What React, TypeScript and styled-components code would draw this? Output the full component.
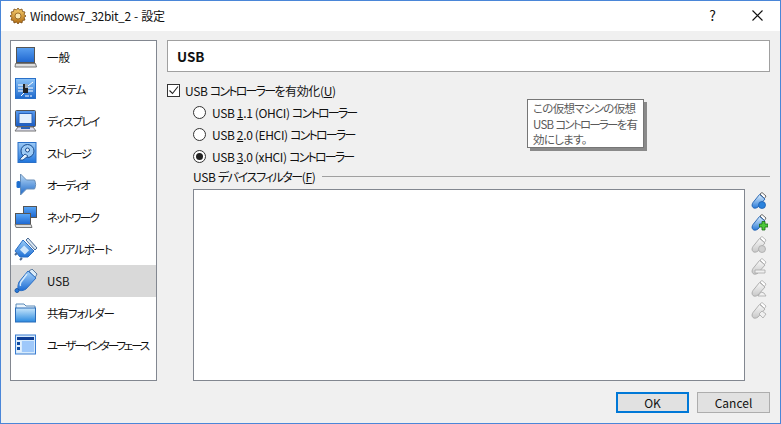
import React from "react";
import styled, { createGlobalStyle } from "styled-components";

const Global = createGlobalStyle`
  html, body { margin: 0; padding: 0; background: #f0f0f0; }
  body { font-family: "Noto Sans CJK JP", "Noto Sans", sans-serif; font-size: 12px; color: #111; }
  * { box-sizing: border-box; }
`;

const Window = styled.div`
  position: relative; width: 781px; height: 424px; border: 1px solid #4a86d8;
  display: flex; flex-direction: column; overflow: hidden;
  font-feature-settings: "palt"; 
`;
const TitleBar = styled.div`
  height: 30px; background: #fff; display: flex; align-items: center; padding-left: 8px; flex: none;
`;
const Title = styled.div`
  margin-left: 3px; font-size: 12px; line-height: 16px; color: #111; flex: 1; letter-spacing: -0.35px; word-spacing: 1px;
`;
const TitleButton = styled.div`
  width: 45px; height: 30px; display: flex; align-items: center; justify-content: center; flex: none; font-size: 14px; margin-top: -2px;
`;
const Body = styled.div`
  flex: 1; background: #f0f0f0; padding: 9px 10px 9px 9px; display: flex; flex-direction: column; gap: 11px; min-height: 0;
`;
const Content = styled.div`
  display: flex; gap: 10px; height: 341px; flex: none;
`;
const Sidebar = styled.div`
  width: 147px; flex: none; background: #fff; border: 1px solid #828790;
`;
const NavItem = styled.div<{ $selected?: boolean }>`
  height: 32px; display: flex; align-items: center; gap: 9px; padding-left: 3px;
  background: ${(p) => (p.$selected ? "#d9d9d9" : "transparent")};
`;
const NavLabel = styled.span<{ $ls: number }>`
  font-size: 11.5px; line-height: 16px; letter-spacing: ${(p) => p.$ls}px; white-space: nowrap; color: #111;
`;
const Main = styled.div`
  flex: 1; display: flex; flex-direction: column; min-width: 0;
`;
const Header = styled.div`
  height: 32px; background: #fff; border: 1px solid #a0a0a0; display: flex; align-items: center; padding-left: 9px;
  font-size: 13.5px; font-weight: 700; color: #111; flex: none;
`;
const Row = styled.label<{ $indent?: number }>`
  display: flex; align-items: center; height: 22px; gap: 6px; padding-left: ${(p) => p.$indent ?? 0}px;
  font-size: 12px; letter-spacing: -0.35px; white-space: nowrap; color: #111;
`;
const CheckRow = styled(Row)`
  margin-top: 7px; gap: 5px;
`;
const Kana = styled.span<{ $ls?: number }>`
  letter-spacing: ${(p) => p.$ls ?? -1.8}px;
`;
const Box = styled.span`
  width: 13px; height: 13px; border: 1px solid #333; background: #fff; display: block; flex: none;
`;
const CheckMark = styled.svg`
  width: 11px; height: 11px; display: block;
`;
const Radio = styled.span<{ $on?: boolean }>`
  width: 13px; height: 13px; border-radius: 50%; border: 1px solid #333; background: #fff; flex: none;
  display: flex; align-items: center; justify-content: center;
  &::after { content: ""; width: 7px; height: 7px; border-radius: 50%; background: ${(p) => (p.$on ? "#222" : "transparent")}; }
`;
const Mn = styled.span`
  text-decoration: underline; text-underline-offset: 1px;
`;
const GroupHead = styled.div`
  display: flex; align-items: center; gap: 6px; padding-left: 26px; height: 20px; margin-top: -1px;
  font-size: 12px; letter-spacing: -0.35px; color: #111; white-space: nowrap;
`;
const Rule = styled.span`
  flex: 1; height: 1px; background: #a0a0a0;
`;
const FilterArea = styled.div`
  display: flex; flex: 1; padding-left: 26px; margin-top: 3px; min-height: 0;
`;
const FilterList = styled.div`
  flex: 1; background: #fff; border: 1px solid #828790;
`;
const Tools = styled.div`
  width: 25px; flex: none; display: flex; flex-direction: column; align-items: flex-end; gap: 4px; padding: 3px 2px 0 0;
`;
const ToolIcon = styled.svg`
  width: 18px; height: 18px; display: block;
`;
const Footer = styled.div`
  display: flex; justify-content: flex-end; gap: 8px; flex: none;
`;
const Button = styled.button<{ $primary?: boolean }>`
  width: 73px; height: 21px; padding: 0; background: #e1e1e1; font: inherit; font-size: 12px; color: #111;
  border: ${(p) => (p.$primary ? "2px solid #0078d7" : "1px solid #adadad")}; line-height: 16px;
`;
const Tooltip = styled.div`
  position: absolute; left: 526px; top: 98px; width: 117px; height: 49px; background: #fff; border: 1px solid #767676;
  box-shadow: 3px 3px 0 #8a8a8a; padding: 1px 0 0 5px; font-size: 11.5px; line-height: 15.5px; color: #5a5a5a; letter-spacing: -0.7px; white-space: nowrap;
`;

const G = ({ id, a = "#8cc4f8", b = "#1f6fd8" }: { id: string; a?: string; b?: string }) => (
  <defs>
    <linearGradient id={id} x1="0" y1="0" x2="0" y2="1">
      <stop offset="0" stopColor={a} />
      <stop offset="1" stopColor={b} />
    </linearGradient>
  </defs>
);

const NavSvg = styled.svg`
  width: 24px; height: 24px; flex: none; display: block;
`;

const icons: Record<string, React.ReactNode> = {
  general: (
    <>
      <G id="g1" a="#5aa0f0" b="#1e66d0" />
      <rect x="2.5" y="2.500" width="18" height="15" fill="url(#g1)" stroke="#555" />
      <path d="M1.500 18.500h20l1 3.500H1z" fill="#ddd" stroke="#777" />
    </>
  ),
  system: (
    <>
      <G id="g2" a="#8cc4f8" b="#1c68cc" />
      <rect x="1.5" y="1.500" width="20" height="20" fill="url(#g2)" stroke="#2a70c8" />
      <path d="M4 8h5M4 11h5M4 14h5M14 9l5-4M14 11h5M14 14h5M7 19l3-3M14 18v2M12 18v2M17 18v2" stroke="#fff" strokeWidth="1" fill="none" />
      <rect x="9" y="7" width="5" height="9" fill="#222" />
      <rect x="11" y="7" width="3" height="4" fill="#9ab" />
    </>
  ),
  display: (
    <>
      <G id="g3" a="#5a9cf0" b="#1a5cc4" />
      <rect x="1.5" y="1.500" width="20" height="16" rx="1" fill="url(#g3)" stroke="#555" />
      <rect x="5" y="4.500" width="13" height="10" fill="#e4f0fd" stroke="#2a62b8" />
      <path d="M4 18h15l3 4H1z" fill="#dde" stroke="#777" />
      <rect x="7" y="18" width="9" height="2" fill="#2a62b8" />
    </>
  ),
  storage: (
    <>
      <G id="g4" a="#9ccaf6" b="#1f74dc" />
      <rect x="4" y="1.500" width="18" height="20" fill="url(#g4)" stroke="#2a70c8" />
      <circle cx="13.500" cy="10" r="6.500" fill="#9dcbf6" stroke="#1c4e90" />
      <path d="M6 18l5-5 3 2-5 4H6z" fill="#e6f2fc" stroke="#1c4e90" strokeWidth=".9" />
      <circle cx="13.500" cy="9" r="2" fill="#e6f2fc" stroke="#1c4e90" />
    </>
  ),
  audio: (
    <>
      <G id="g5" a="#bcdcf8" b="#1c68c8" />
      <path d="M6.500 1l6 6h8c1.500 3 1.500 6 0 9h-8l-6 6z" fill="url(#g5)" stroke="#6a8fb8" />
      <rect x="2.500" y="8" width="4" height="7" rx="1.500" fill="#1f70d0" />
    </>
  ),
  network: (
    <>
      <G id="g6" a="#5aa8f8" b="#1c66d0" />
      <rect x="9.5" y="1.500" width="13" height="11" fill="url(#g6)" stroke="#555" />
      <rect x="1.5" y="8.500" width="15" height="11" fill="url(#g6)" stroke="#555" />
      <path d="M1 19.500h16l1 3H2z" fill="#ddd" stroke="#777" />
    </>
  ),
  serial: (
    <>
      <G id="g7" a="#9ccdf8" b="#1f70d4" />
      <path d="M14 1l9 10-2 2-9-10z" fill="#d8e6f2" stroke="#4a6a94" />
      <path d="M9 3l11 11-6 6H6l-5-6z" fill="url(#g7)" stroke="#2a6ec4" />
      <path d="M7 10h7v6H7z" fill="#cfe6fb" transform="rotate(45 10.500 13)" />
      <path d="M3 16l-2 2M8 21l-2 2" stroke="#4a6a94" strokeWidth="2" />
    </>
  ),
  usb: (
    <>
      <G id="g8" a="#a8d4fa" b="#1c6cd4" />
      <path d="M15 2l3-2 5 5-2 4z" fill="#dcecf8" stroke="#5a7aa0" />
      <path d="M14 2l8 7-10 11c-3 2-6 2-7 1-2-2-1-5 0-8z" fill="url(#g8)" stroke="#2a6ec4" />
      <path d="M13 5l-6 8c-1 2-1 3-.5 4" fill="none" stroke="#d4eafc" strokeWidth="1.500" />
      <circle cx="3" cy="21.500" r="2" fill="#2a7ad8" stroke="#1c5aa8" />
    </>
  ),
  folder: (
    <>
      <G id="g9" a="#c8e6fb" b="#2a8ae0" />
      <path d="M2 6V3h8l2 2h9v3H2z" fill="#eaf4fc" stroke="#5a8ab8" />
      <rect x="1.5" y="7" width="20" height="14" fill="url(#g9)" stroke="#2b6cb8" />
    </>
  ),
  ui: (
    <>
      <rect x="1.5" y="2" width="20" height="19" fill="#d7ebfc" stroke="#3a7cd0" />
      <rect x="3" y="4" width="17" height="3" fill="#0d3c94" />
      <rect x="3" y="8" width="4" height="11" fill="#e4f0fd" />
      <rect x="3" y="9" width="3" height="3" fill="#0d4aa0" />
      <rect x="3" y="14" width="3" height="3" fill="#0d4aa0" />
      <rect x="8" y="8" width="12" height="11" fill="#9ec8fa" />
    </>
  ),
};

const nav: [string, string, number][] = [
  ["general", "一般", 0], ["system", "システム", -0.8], ["display", "ディスプレイ", -1.35], ["storage", "ストレージ", -1.7],
  ["audio", "オーディオ", -1.9], ["network", "ネットワーク", -1.6], ["serial", "シリアルポート", -1.15], ["usb", "USB", 0],
  ["folder", "共有フォルダー", -1.05], ["ui", "ユーザーインターフェース", -2.05],
];

type Badge = "remove" | "add" | "edit" | "del" | "up";
const ToolGlyph = ({ active, badge, id }: { active?: boolean; badge: Badge; id: string }) => {
  const a = active ? "#dceefc" : "#f8f8f8";
  const b = active ? "#2a7ad8" : "#c8c8c8";
  const s = active ? "#2060b0" : "#a8a8a8";
  return (
    <ToolIcon viewBox="0 0 18 18">
      <G id={id} a={a} b={b} />
      <path d="M10 2l2-1.500 4 3.500-1.500 2.500z" fill="#fff" stroke={active ? "#444" : "#aaa"} strokeWidth=".8" />
      <path d="M9.500 2.500l5.500 4.500-7 8c-2 1.500-4 1.500-5 .5-1.500-1.500-1-3.500 0-5z" fill={`url(#${id})`} stroke={s} strokeWidth=".9" />
      {badge === "remove" && <circle cx="12" cy="13" r="3.500" fill={active ? "#2a82dc" : "#d0d0d0"} stroke={s} strokeWidth=".8" />}
      {badge === "add" && <path d="M9.500 10h2.500V7.500h3V10H18v3h-3v3h-3v-3H9.500z" fill="#4cc83a" stroke="#1a6a12" strokeWidth=".8" />}
      {badge === "edit" && <path d="M5 12h10v3H5z" fill="#f0f0f0" stroke="#a8a8a8" strokeWidth=".8" />}
      {badge === "del" && <path d="M8 16l3-4 3 1 2 3z" fill="#f0f0f0" stroke="#a8a8a8" strokeWidth=".8" />}
      {badge === "up" && <path d="M9 12l3-3 4 3-3 4z" fill="#f0f0f0" stroke="#a8a8a8" strokeWidth=".8" />}
    </ToolIcon>
  );
};

export default function App() {
  return (
    <>
      <Global />
      <Window>
        <TitleBar>
          <svg width="18" height="18" viewBox="0 0 18 18">
            <G id="gear" a="#f8d070" b="#b06a10" />
            <path d="M9 1l1.500 2 2.500-1 .5 2.500 2.500.5-1 2.500 2 1.500-2 1.500 1 2.500-2.500.5-.5 2.500-2.500-1L9 17l-1.500-2-2.500 1-.5-2.500L2 13l1-2.500L1 9l2-1.500L2 5l2.500-.5L5 2l2.500 1z" fill="url(#gear)" stroke="#7a4a10" strokeWidth=".8" />
            <circle cx="9" cy="9" r="3" fill="#fbe8b0" stroke="#8a5a18" strokeWidth=".8" />
          </svg>
          <Title>Windows7_32bit_2 - 設定</Title>
          <TitleButton>?</TitleButton>
          <TitleButton>
            <svg width="11" height="11" viewBox="0 0 11 11"><path d="M.5.500l10 10M10.500.500l-10 10" stroke="#111" strokeWidth="1.100" /></svg>
          </TitleButton>
        </TitleBar>
        <Body>
          <Content>
            <Sidebar>
              {nav.map(([k, label, ls]) => (
                <NavItem key={k} $selected={k === "usb"}>
                  <NavSvg viewBox="0 0 24 24">{icons[k]}</NavSvg>
                  <NavLabel $ls={ls}>{label}</NavLabel>
                </NavItem>
              ))}
            </Sidebar>
            <Main>
              <Header>USB</Header>
              <CheckRow>
                <Box>
                  <CheckMark viewBox="0 0 11 11"><path d="M1.500 5.500l3 3 5.500-7" fill="none" stroke="#222" strokeWidth="1.100" /></CheckMark>
                </Box>
                <span>USB <Kana>コントローラー</Kana>を有効化(<Mn>U</Mn>)</span>
              </CheckRow>
              <Row $indent={26}><Radio /><span>USB <Mn>1</Mn>.1 (OHCI) <Kana>コントローラー</Kana></span></Row>
              <Row $indent={26}><Radio /><span>USB <Mn>2</Mn>.0 (EHCI) <Kana>コントローラー</Kana></span></Row>
              <Row $indent={26}><Radio $on /><span>USB <Mn>3</Mn>.0 (xHCI) <Kana>コントローラー</Kana></span></Row>
              <GroupHead><span>USB <Kana $ls={-1.35}>デバイスフィルター</Kana>(<Mn>F</Mn>)</span><Rule /></GroupHead>
              <FilterArea>
                <FilterList />
                <Tools>
                  <ToolGlyph id="t1" active badge="remove" />
                  <ToolGlyph id="t2" active badge="add" />
                  <ToolGlyph id="t3" badge="remove" />
                  <ToolGlyph id="t4" badge="edit" />
                  <ToolGlyph id="t5" badge="del" />
                  <ToolGlyph id="t6" badge="up" />
                </Tools>
              </FilterArea>
            </Main>
          </Content>
          <Footer>
            <Button $primary>OK</Button>
            <Button>Cancel</Button>
          </Footer>
        </Body>
        <Tooltip>この仮想マシンの仮想<br />USB <Kana>コントローラー</Kana>を有<br />効にします。</Tooltip>
      </Window>
    </>
  );
}
